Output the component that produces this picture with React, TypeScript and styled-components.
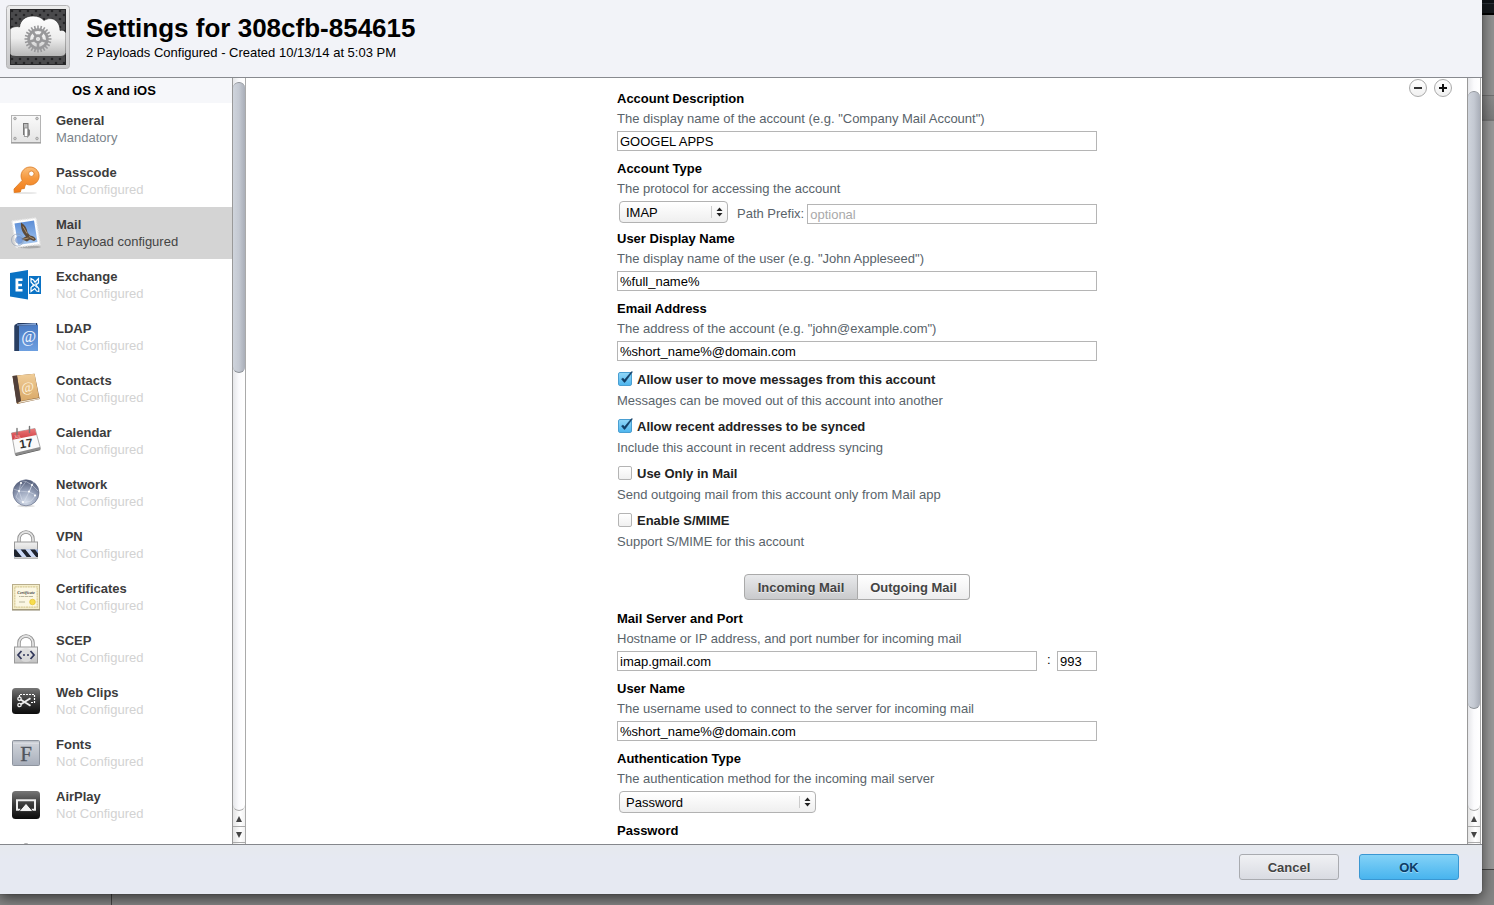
import React, { useState } from "react";
import styled, { createGlobalStyle, css } from "styled-components";

const GlobalStyle = createGlobalStyle`
  *, *::before, *::after { box-sizing: border-box; }
  html, body, #root { height: 100%; }
  body {
    margin: 0;
    overflow: hidden;
    font: 13px/20px "Liberation Sans", Helvetica, Arial, sans-serif;
    color: #000;
  }
  button, input, select { font: inherit; margin: 0; }
`;

/* ---------- Page behind the dialog ---------- */

const Page = styled.div`
  display: grid;
  grid-template: minmax(0, 1fr) 11px / minmax(0, 1fr) 12px;
  height: 100vh;
  background: #858585;
`;

const Dialog = styled.section`
  position: relative;
  z-index: 1;
  display: flex;
  flex-direction: column;
  min-width: 0;
  overflow: hidden;
  background: #fff;
  border-bottom-right-radius: 5px;
  box-shadow: 0 0 1px #222, 0 4px 14px rgba(0, 0, 0, 0.6);
`;

const BackdropSide = styled.div`
  display: flex;
  flex-direction: column;
`;

const BackdropToolbar = styled.div`
  height: 15px;
  background: linear-gradient(#0e1216 0 3px, #2c3238 3px 4px, #15191d 4px 13px, #000 13px);
`;

const BackdropPane = styled.div`
  height: 80px;
  background: #929292;
`;

const BackdropBar = styled.div`
  height: 26px;
  border-top: 1px solid #727272;
  border-bottom: 2px solid #777;
  background: linear-gradient(#8c8c8c, #7c7c7c);
`;

const BackdropRest = styled.div`
  flex: 1;
  margin-bottom: 24px;
  border-bottom: 1px solid #444;
  background: #999;
`;

const BackdropBottom = styled.div`
  grid-column: 1 / -1;
  display: flex;
`;

const BackdropColumn = styled.div`
  width: 112px;
  border-right: 1px solid #444;
`;

/* ---------- Dialog frame ---------- */

const Header = styled.header`
  display: flex;
  flex: none;
  gap: 16px;
  height: 78px;
  padding: 5px 6px;
  background: #f2f3f8;
  border-bottom: 1px solid #888a8f;
`;

const HeaderText = styled.div`
  padding-top: 7px;
`;

const Title = styled.h1`
  margin: 0;
  font-size: 26px;
  line-height: 32px;
`;

const Subtitle = styled.p`
  margin: 0;
  line-height: 18px;
`;

const Body = styled.div`
  display: flex;
  flex: 1;
  min-height: 0;
  padding-right: 1px;
`;

const Footer = styled.footer`
  display: flex;
  flex: none;
  justify-content: flex-end;
  gap: 20px;
  height: 50px;
  padding: 9px 23px;
  background: linear-gradient(#e6e9ee, #e6e9f2 30%);
  border-top: 1px solid #85878c;
`;

const ActionButton = styled.button<{ $primary?: boolean }>`
  width: 100px;
  height: 26px;
  padding: 2px 0 0;
  border: 1px solid #a9abb0;
  border-radius: 3px;
  background: linear-gradient(#f0f1f4, #d9dbe2);
  color: #444;
  font-weight: bold;
  text-shadow: 0 1px 0 rgba(255, 255, 255, 0.6);
  ${(p) =>
    p.$primary &&
    css`
      border-color: #3a97d2;
      background: linear-gradient(#83d2f7, #48b4ee);
      color: #0b3c66;
      text-shadow: 0 1px 0 rgba(255, 255, 255, 0.4);
    `}
`;

/* ---------- Scroll bars ---------- */

const Bar = styled.div`
  display: flex;
  flex: none;
  flex-direction: column;
  width: 14px;
  height: 100%;
  padding-bottom: 1px;
  border-left: 1px solid #999;
  border-right: 1px solid #aaa;
  background: linear-gradient(90deg, #e4e4e4, #fff 60%, #f2f2f2);
`;

const Track = styled.div<{ $offset: number }>`
  flex: 1;
  padding-top: ${(p) => p.$offset}px;
  border-bottom: 1px solid #aaa;
  border-radius: 0 0 6px 6px;
  background: linear-gradient(90deg, #e6e7ea, #fbfbfd 50%, #fff);
`;

const Thumb = styled.div<{ $share: number }>`
  height: ${(p) => p.$share}%;
  border: 1px solid #8d9197;
  border-width: 1px 0;
  border-radius: 6px;
  background: linear-gradient(90deg, #cfd4dc, #c4c9d2 50%, #a9aeb8);
`;

const StepButton = styled.button`
  display: grid;
  place-items: center;
  height: 16px;
  padding: 0;
  border: 0;
  border-bottom: 1px solid #aaa;
  background: transparent;
`;

function ScrollBar({ offset, share }: { offset: number; share: number }) {
  return (
    <Bar>
      <Track $offset={offset}>
        <Thumb $share={share} />
      </Track>
      <StepButton aria-label="Scroll up">
        <svg width="6" height="6" viewBox="0 0 6 6"><path d="M3 0L6 6H0z" fill="#444" /></svg>
      </StepButton>
      <StepButton aria-label="Scroll down">
        <svg width="6" height="6" viewBox="0 0 6 6"><path d="M3 6L0 0H6z" fill="#444" /></svg>
      </StepButton>
    </Bar>
  );
}

/* ---------- Sidebar ---------- */

const Sidebar = styled.nav`
  display: flex;
  flex: none;
  width: 246px;
`;

const SidebarList = styled.div`
  flex: 1;
  overflow: hidden;
`;

const SidebarHeading = styled.h2`
  height: 25px;
  margin: 0;
  padding-right: 4px;
  background: #f6f7fa;
  font-size: 13px;
  line-height: 25px;
  text-align: center;
`;

const PayloadButton = styled.button<{ $selected?: boolean }>`
  display: flex;
  align-items: center;
  gap: 14px;
  width: 100%;
  height: 52px;
  padding: 0 10px;
  border: 0;
  background: ${(p) => (p.$selected ? "#d4d4d4" : "#fff")};
  text-align: left;
  line-height: 17px;
`;

const PayloadName = styled.strong`
  display: block;
  color: #3c3c3c;
`;

const PayloadStatus = styled.span<{ $color: string }>`
  display: block;
  color: ${(p) => p.$color};
`;

/* ---------- Form ---------- */

const Content = styled.main`
  position: relative;
  flex: 1;
  min-width: 0;
  overflow: hidden;
  padding: 11px 0 0 1px;
`;

const PayloadControls = styled.div`
  position: absolute;
  top: 1px;
  right: 15px;
  display: flex;
  gap: 7px;
`;

const RoundButton = styled.button`
  display: grid;
  place-items: center;
  width: 18px;
  height: 18px;
  padding: 0;
  border: 1px solid #aaa;
  border-radius: 50%;
  background: linear-gradient(#fff, #f0f0f0);
`;

const Form = styled.form`
  width: 480px;
  margin: 0 auto;
`;

const Field = styled.div`
  display: flex;
  flex-direction: column;
  margin-bottom: 8px;
`;

const FieldLabel = styled.label`
  font-weight: bold;
`;

const Hint = styled.p`
  margin: 0;
  color: #59636a;
`;

const FieldHint = styled(Hint)`
  margin-bottom: 2px;
`;

const TextInput = styled.input`
  width: 100%;
  min-width: 0;
  height: 20px;
  padding: 2px 2px 0;
  border: 1px solid #b5b5b5;
  border-radius: 0;
  background: #fff;
  color: #000;
  outline: 0;
  &::placeholder { color: #a9a9a9; }
`;

const PortInput = styled(TextInput)`
  flex: none;
  width: 40px;
`;

const Row = styled.div`
  display: flex;
`;

const AccountTypeRow = styled(Row)`
  align-items: flex-end;
  gap: 3px;
  height: 23px;
  margin-bottom: -3px;
`;

const PrefixLabel = styled.label`
  flex: none;
  margin-left: 6px;
  color: #59636a;
`;

const Colon = styled.span`
  flex: none;
  width: 20px;
  padding-left: 10px;
  line-height: 18px;
`;

const SelectBox = styled.span<{ $width: number }>`
  position: relative;
  flex: none;
  align-self: flex-start;
  width: ${(p) => p.$width}px;
  height: 22px;
  margin-left: 2px;
  svg {
    position: absolute;
    top: 4px;
    right: 4px;
    pointer-events: none;
  }
`;

const Select = styled.select`
  appearance: none;
  width: 100%;
  height: 22px;
  padding: 1px 20px 1px 6px;
  border: 1px solid #b2b2b2;
  border-radius: 4px;
  background: linear-gradient(#fff, #efefef);
  color: #000;
`;

function DropDown({ id, width, options }: { id: string; width: number; options: string[] }) {
  return (
    <SelectBox $width={width}>
      <Select id={id}>
        {options.map((o) => <option key={o}>{o}</option>)}
      </Select>
      <svg width="13" height="14" viewBox="0 0 13 14">
        <path d="M.5 1v12" stroke="#ccc" />
        <path d="M8.500 2.500L11.500 6h-6zM8.500 11.500L5.500 8h6z" fill="#222" />
      </svg>
    </SelectBox>
  );
}

const CheckGroup = styled.div`
  height: 47px;
`;

const CheckLabel = styled.label`
  display: flex;
  gap: 5px;
  margin-bottom: 1px;
  padding-left: 1px;
  color: #222;
  font-weight: bold;
  line-height: 21px;
`;

const CheckBox = styled.span`
  position: relative;
  display: flex;
  align-self: flex-start;
  padding-top: 3px;
  svg {
    position: absolute;
    left: 0;
    bottom: 0;
    pointer-events: none;
  }
`;

const CheckInput = styled.input`
  appearance: none;
  width: 14px;
  height: 14px;
  border: 1px solid #b4b4b4;
  border-radius: 2px;
  background: linear-gradient(#fff, #f0f0f0);
  &:checked {
    border-color: #4a9fd2;
    background: linear-gradient(#8fd6f8, #4fb6ee);
  }
`;

function Check({ label, hint, initial }: { label: string; hint: string; initial: boolean }) {
  const [on, setOn] = useState(initial);
  return (
    <CheckGroup>
      <CheckLabel>
        <CheckBox>
          <CheckInput type="checkbox" checked={on} onChange={() => setOn(!on)} />
          {on && (
            <svg width="15" height="15" viewBox="0 0 15 15">
              <path d="M3.500 8L6 11.300 7 11.300 14.500 .8 13.300 .8 6.500 8.800 5 7z" fill="#123f66" stroke="#123f66" strokeWidth=".5" />
            </svg>
          )}
        </CheckBox>
        {label}
      </CheckLabel>
      <Hint>{hint}</Hint>
    </CheckGroup>
  );
}

const Segments = styled.div`
  display: flex;
  justify-content: center;
  padding: 17px 0 9px;
`;

const Segment = styled.button<{ $active: boolean }>`
  width: 113px;
  height: 26px;
  padding: 2px 0 0;
  border: 1px solid #aaa;
  background: ${(p) => (p.$active ? "linear-gradient(#e8e9eb, #c9cacc)" : "linear-gradient(#fff, #ededee)")};
  color: #444;
  font-weight: bold;
  text-shadow: 0 1px 0 rgba(255, 255, 255, 0.6);
  &:first-child { width: 114px; border-radius: 4px 0 0 4px; }
  &:last-child { border-left: 0; border-radius: 0 4px 4px 0; width: 112px; }
`;

/* ---------- Drawings ---------- */

const gearTeeth = Array.from({ length: 24 }, (_, i) => i * 15);

const ProfileIcon = () => (
  <svg width="64" height="64" viewBox="0 0 64 64">
    <defs>
      <pattern id="mesh" width="8" height="8" patternUnits="userSpaceOnUse">
        <rect width="8" height="8" fill="#4a4a4c" />
        <circle cx="2" cy="2" r="1.300" fill="#252527" />
        <circle cx="6" cy="6" r="1.300" fill="#252527" />
      </pattern>
      <linearGradient id="cloud" x1="0" y1="0" x2="0" y2="1">
        <stop offset="0" stopColor="#fff" /><stop offset=".55" stopColor="#ededed" /><stop offset="1" stopColor="#b5b5b5" />
      </linearGradient>
      <linearGradient id="frame" x1="0" y1="0" x2="0" y2="1">
        <stop offset="0" stopColor="#ececec" /><stop offset="1" stopColor="#c6c6c8" />
      </linearGradient>
      <clipPath id="inner"><rect x="4" y="4" width="56" height="56" /></clipPath>
    </defs>
    <rect x=".5" y=".5" width="63" height="63" rx="3" fill="url(#frame)" stroke="#b4b4b6" />
    <rect x="4.500" y="4.500" width="55" height="55" fill="url(#mesh)" stroke="#29292b" />
    <g clipPath="url(#inner)">
      <path d="M4 24C7 21.500 11 21 13.500 22C14.500 15 19.500 11 27 11C32 11 35.500 12.500 38 15.500C46 10.500 54 16 54 25.500C57 24.500 59 26 60 28V48Q59 51.500 55 51.500H10Q5 51.500 4 49Z" fill="url(#cloud)" stroke="#222" strokeWidth=".6" />
      <g transform="translate(32 34)" fill="none" stroke="#98989a">
        {gearTeeth.map((a) => <path key={a} d="M0 -10V-13.500" strokeWidth="1.600" transform={`rotate(${a})`} />)}
        <circle r="9.300" strokeWidth="2.800" />
        <circle r="3.400" strokeWidth="2.600" />
        {[36, 108, 180, 252, 324].map((a) => <path key={a} d="M0 -4V-9" strokeWidth="2.600" transform={`rotate(${a})`} />)}
        <circle r="1.400" fill="#ddd" stroke="none" />
      </g>
    </g>
  </svg>
);

const Defs = () => (
  <svg width="0" height="0" style={{ position: "absolute" }} aria-hidden="true">
    <defs>
      <linearGradient id="plate" x1="0" y1="0" x2="0" y2="1"><stop offset="0" stopColor="#fafafa" /><stop offset="1" stopColor="#e4e4e4" /></linearGradient>
      <linearGradient id="orange" x1="0" y1="0" x2="0" y2="1"><stop offset="0" stopColor="#fcc07c" /><stop offset=".45" stopColor="#f5973c" /><stop offset="1" stopColor="#f27c1a" /></linearGradient>
      <linearGradient id="sky" x1="0" y1="0" x2="0" y2="1"><stop offset="0" stopColor="#5b8dd6" /><stop offset="1" stopColor="#a5c6ee" /></linearGradient>
      <linearGradient id="blueBook" x1="0" y1="0" x2="0" y2="1"><stop offset="0" stopColor="#4a7bc4" /><stop offset="1" stopColor="#6d9fe0" /></linearGradient>
      <linearGradient id="tanBook" x1="0" y1="0" x2="0" y2="1"><stop offset="0" stopColor="#f0cd98" /><stop offset="1" stopColor="#d9a968" /></linearGradient>
      <linearGradient id="red" x1="0" y1="0" x2="0" y2="1"><stop offset="0" stopColor="#ea7a7a" /><stop offset="1" stopColor="#cf3b40" /></linearGradient>
      <radialGradient id="globe" cx=".5" cy=".85" r=".9"><stop offset="0" stopColor="#d3dbe8" /><stop offset=".5" stopColor="#96a1b9" /><stop offset="1" stopColor="#47516e" /></radialGradient>
      <linearGradient id="steel" x1="0" y1="0" x2="0" y2="1"><stop offset="0" stopColor="#f2f2f2" /><stop offset="1" stopColor="#c0c0c0" /></linearGradient>
      <linearGradient id="black" x1="0" y1="0" x2="0" y2="1"><stop offset="0" stopColor="#777" /><stop offset=".45" stopColor="#3c3c3c" /><stop offset="1" stopColor="#0c0c0c" /></linearGradient>
      <linearGradient id="slate" x1="0" y1="0" x2="0" y2="1"><stop offset="0" stopColor="#d3d6dc" /><stop offset="1" stopColor="#a8afbb" /></linearGradient>
    </defs>
  </svg>
);

const Icon = ({ children }: { children: React.ReactNode }) => (
  <svg width="32" height="32" viewBox="0 0 32 32" style={{ flex: "none" }} aria-hidden="true">{children}</svg>
);

const At = ({ x, y, color, size }: { x: number; y: number; color: string; size: number }) => (
  <text x={x} y={y} fill={color} fontFamily="Liberation Serif, serif" fontStyle="italic" fontSize={size} textAnchor="middle">@</text>
);

const Shackle = () => (
  <>
    <path d="M9 14V10a7 7 0 0 1 14 0V14" fill="none" stroke="#8c8c8c" strokeWidth="3.400" />
    <path d="M9 14V10a7 7 0 0 1 14 0V14" fill="none" stroke="#e2e2e2" strokeWidth="1.800" />
  </>
);

const icons: Record<string, React.ReactNode> = {
  General: (
    <>
      <rect x="1.500" y="2.500" width="29" height="27" fill="url(#plate)" stroke="#b4b4b4" />
      <path d="M1 30h30" stroke="#8e8e8e" />
      {[[5, 5.500], [27, 5.500], [5, 25.500], [27, 25.500]].map(([x, y]) => (
        <circle key={`${x}-${y}`} cx={x} cy={y} r="1.300" fill="#ccc" stroke="#999" strokeWidth=".8" />
      ))}
      <path d="M17 15l3 2v5l-3 3z" fill="#888" />
      <rect x="13.500" y="10.500" width="4.500" height="11" fill="#bbb" stroke="#777" />
      <rect x="14.300" y="15" width="3.500" height="8.500" fill="#fff" stroke="#888" strokeWidth=".8" />
    </>
  ),
  Passcode: (
    <>
      <ellipse cx="15" cy="28" rx="12" ry="1" fill="#e6e6e6" />
      <path fillRule="evenodd" d="M20 2a9 9 0 1 1-3.600 17.200L15 20.500l-.6 3-3.200.4-.8 3-6.200.6L4 24l8.200-8.600A9 9 0 0 1 20 2zM21.300 6a2.700 2.700 0 1 0 .1 5.400A2.700 2.700 0 0 0 21.300 6z" fill="url(#orange)" stroke="#d9761c" strokeWidth=".8" />
    </>
  ),
  Mail: (
    <>
      <ellipse cx="19" cy="30" rx="12" ry="1.500" fill="#aaa" />
      <path d="M2 4L26 1L30 27L6 30.500Z" fill="#fff" stroke="#e9e9e9" strokeWidth="1.500" strokeDasharray="1.500 1" />
      <path d="M4.500 6.500L24 3.500L27.500 25L8 28Z" fill="url(#sky)" />
      <path d="M11 5.500C15 8 17 11 17.500 15.500L20 18.500C23 19 25 20 26 22.500L24 24L20 22.500L17 24.500L11 22L16 19.500C12.500 16 10.500 11 11 5.500Z" fill="#5b4a3a" />
      <path d="M13 9.500L17 16.500M19 19.500L24 22M14 22L18.500 21" stroke="#b79a72" strokeWidth=".9" />
      <circle cx="7.500" cy="23" r="6" fill="none" stroke="#8b98ad" strokeWidth=".9" opacity=".7" />
      <circle cx="9" cy="23" r="3.500" fill="#6b93d6" stroke="#6f87b3" strokeWidth=".7" opacity=".7" />
    </>
  ),
  Exchange: (
    <>
      <path d="M0 4L18 1V30.500L0 27.500Z" fill="#0a72c4" />
      <path d="M5.500 9.500H12.500V12H8.300V14.700H12V17.200H8.300V20H12.500V22.500H5.500Z" fill="#fff" />
      <path d="M19 7H31V25H19Z" fill="#0a72c4" />
      <path d="M21 9.500L23.500 11L25 13.200L28.500 9.500V14L25.800 16L28.800 19.500V22.500L26.500 22L24.800 19.500L21 22.500V18.500L23.700 16L21 13Z" fill="none" stroke="#fff" strokeWidth="1.200" />
      <path d="M22.500 14.500L27 18.500M27 13.500L22.500 18" stroke="#fff" />
    </>
  ),
  LDAP: (
    <>
      <path d="M4.500 4L8 2H27L27.500 4V30H4.500Z" fill="#24395e" />
      <path d="M7 3.500L26 2V4.500H7Z" fill="#7fa0d2" />
      <path d="M9 5L28 4V30H9Z" fill="url(#blueBook)" />
      <path d="M4.500 5L9 5V30H4.500Z" fill="#283e62" />
      <At x={18.500} y={20.500} color="#eef4ff" size={16} />
    </>
  ),
  Contacts: (
    <>
      <path d="M2.500 3L24.500 .8L29.700 26L7 31Z" fill="#7b542e" />
      <path d="M7 2.500L24.500 .8L29 24.500L11 28Z" fill="url(#tanBook)" />
      <path d="M2.500 3L7 2.500L11 28L6.500 30Z" fill="#51403a" />
      <path d="M7 30.500L11 28.300L29 25L29.500 26Z" fill="#f2e6d0" />
      <g transform="rotate(-8 17 15)"><At x={17.500} y={19} color="#fff3dc" size={14} /></g>
    </>
  ),
  Calendar: (
    <>
      <path d="M5 29L28 23L30.700 25L6 31Z" fill="#555" />
      <path d="M1.500 8L25 3.500L30.500 23.500L5.300 29.500Z" fill="#fafafa" stroke="#999" strokeWidth=".8" />
      <path d="M5 28L29.800 22L30.500 24.500L5.800 30.500Z" fill="#8b8b8b" />
      <path d="M1.500 8L25 3.500L26.500 10L2.500 14.800Z" fill="url(#red)" />
      <path d="M7 9.500V3.500M19.500 7.500V1.500" stroke="#777" strokeWidth="1.400" strokeLinecap="round" />
      <text x="16" y="22.500" fill="#333" fontFamily="Liberation Sans, sans-serif" fontWeight="bold" fontSize="12" textAnchor="middle" transform="rotate(-9 16 18)">17</text>
      <text x="7.500" y="13" fill="#fbdada" fontFamily="Liberation Sans, sans-serif" fontSize="4" textAnchor="middle" transform="rotate(-9 8 12)">JUL</text>
    </>
  ),
  Network: (
    <>
      <ellipse cx="16" cy="29" rx="9" ry="1.200" fill="#ddd" />
      <circle cx="16" cy="15.800" r="13" fill="url(#globe)" stroke="#5b6480" strokeWidth=".6" />
      <path d="M10 3.500L16 4.500L22 8L19 15L9 14L6 20L13 26L21 24L26 18L19 15L24 4M9 14L11 5M19 15L14 25M22 8L28 14M3.500 12L9 14L13 26M16 4.500L9 14" fill="none" stroke="#e6ebf5" strokeWidth=".6" opacity=".7" />
      {[[9, 14], [19, 14.500], [22, 8], [13, 25], [25, 18.500], [11, 6]].map(([x, y]) => <circle key={`${x}-${y}`} cx={x} cy={y} r="1.100" fill="#fff" />)}
    </>
  ),
  VPN: (
    <>
      <Shackle />
      <rect x="4.500" y="13" width="23" height="16.500" fill="url(#steel)" stroke="#999" />
      <rect x="4" y="20.500" width="24" height="7.500" fill="#8fa9dc" />
      <path d="M4 20.500H6L12 28H5L4 26.500ZM10.500 20.500H15.500L21.500 28H16.500ZM20 20.500H25L28 24.500V28H26Z" fill="#20242e" />
      <path d="M6 20.500H10.500L16.500 28H12ZM15.500 20.500H20L26 28H21.500Z" fill="#cddaf5" />
      <path d="M4 29H28" stroke="#ddd" />
    </>
  ),
  Certificates: (
    <>
      <rect x="2.500" y="3.500" width="27" height="25" fill="#f5eecb" stroke="#b9ae8b" />
      <rect x="4.800" y="5.800" width="22.400" height="20.400" fill="#fbf7e2" stroke="#d9cb98" strokeWidth="1.200" strokeDasharray="2 .6" />
      <text x="16" y="12.500" fill="#444" fontFamily="Liberation Serif, serif" fontStyle="italic" fontWeight="bold" fontSize="4" textAnchor="middle">Certificate</text>
      <path d="M9 15.500h1.500m.5 0h3m.5 0h4m.5 0h4M9 21h6" stroke="#a8a48c" strokeWidth=".8" />
      <circle cx="22.500" cy="21" r="2.800" fill="#f7dd4e" stroke="#e2bf2c" strokeWidth=".7" />
      <path d="M2 29H30" stroke="#8d866c" />
    </>
  ),
  SCEP: (
    <>
      <Shackle />
      <rect x="4.500" y="14" width="23" height="16" fill="url(#steel)" stroke="#999" />
      <circle cx="16" cy="22" r="7" fill="#dcdcdc" opacity=".8" />
      <path d="M11.500 18L8 22L11.500 26M20.500 18L24 22L20.500 26" fill="none" stroke="#33395c" strokeWidth="1.800" />
      <path d="M13 22h2M17 22h2" stroke="#33395c" strokeWidth="1.600" />
    </>
  ),
  "Web Clips": (
    <>
      <rect x="2" y="3" width="28" height="26" rx="3.500" fill="url(#black)" />
      <path d="M9.500 12V9.500H24.500V17.500H20" fill="none" stroke="#fff" strokeWidth="1.200" strokeDasharray="2 1" />
      <path d="M10.500 14.500L20.500 20.800M10.500 19.500L20.500 13.200" stroke="#eee" strokeWidth="1.900" />
      <circle cx="9.500" cy="13.800" r="1.700" fill="none" stroke="#eee" strokeWidth="1.300" />
      <circle cx="9.500" cy="20" r="1.700" fill="none" stroke="#eee" strokeWidth="1.300" />
    </>
  ),
  Fonts: (
    <>
      <rect x="2.500" y="3.500" width="27" height="25" rx="1" fill="url(#slate)" stroke="#8f959f" />
      <path d="M3 5H29" stroke="#a9aeb6" />
      <path d="M3 6H29" stroke="#e3e6ea" />
      <text x="16" y="24" fill="#50555e" stroke="#50555e" strokeWidth=".3" fontFamily="Liberation Serif, serif" fontSize="21" textAnchor="middle">F</text>
    </>
  ),
  AirPlay: (
    <>
      <rect x="2" y="2" width="28" height="28" rx="3.500" fill="url(#black)" />
      <path d="M10.500 20.700H7V11.200H25V20.700H21.500" fill="none" stroke="#eee" strokeWidth="2" />
      <path d="M16 14.300L23 22.500H9Z" fill="#f2f2f2" stroke="#1c1c1c" strokeWidth=".8" />
    </>
  ),
  "Global HTTP Proxy": <path d="M14.500 2h3L19 6H13z" fill="#b5b5b5" />,
};

/* ---------- App ---------- */

const statuses: Record<string, { text: string; color: string }> = {
  General: { text: "Mandatory", color: "#7b848b" },
  Mail: { text: "1 Payload configured", color: "#444" },
};
const notConfigured = { text: "Not Configured", color: "#d2d2d2" };

const payloads = [
  "General", "Passcode", "Mail", "Exchange", "LDAP", "Contacts", "Calendar", "Network",
  "VPN", "Certificates", "SCEP", "Web Clips", "Fonts", "AirPlay",
];

function TextField({ id, label, hint, value }: { id: string; label: string; hint: string; value: string }) {
  return (
    <Field>
      <FieldLabel htmlFor={id}>{label}</FieldLabel>
      <FieldHint>{hint}</FieldHint>
      <TextInput id={id} defaultValue={value} />
    </Field>
  );
}

export default function App() {
  const [selected, setSelected] = useState("Mail");
  const [tab, setTab] = useState("Incoming Mail");
  return (
    <>
      <GlobalStyle />
      <Defs />
      <Page>
        <Dialog aria-labelledby="dialog-title">
          <Header>
            <ProfileIcon />
            <HeaderText>
              <Title id="dialog-title">Settings for 308cfb-854615</Title>
              <Subtitle>2 Payloads Configured - Created 10/13/14 at 5:03 PM</Subtitle>
            </HeaderText>
          </Header>
          <Body>
            <Sidebar>
              <SidebarList>
                <SidebarHeading>OS X and iOS</SidebarHeading>
                {payloads.map((name) => {
                  const status = statuses[name] ?? notConfigured;
                  return (
                    <PayloadButton key={name} $selected={name === selected} onClick={() => setSelected(name)}>
                      <Icon>{icons[name]}</Icon>
                      <span>
                        <PayloadName>{name}</PayloadName>
                        <PayloadStatus $color={status.color}>{status.text}</PayloadStatus>
                      </span>
                    </PayloadButton>
                  );
                })}
                <PayloadButton aria-label="Global HTTP Proxy">
                  <Icon>{icons["Global HTTP Proxy"]}</Icon>
                </PayloadButton>
              </SidebarList>
              <ScrollBar offset={4} share={40} />
            </Sidebar>
            <Content>
              <PayloadControls>
                <RoundButton aria-label="Remove payload">
                  <svg width="8" height="8" viewBox="0 0 8 8"><path d="M0 4h8" stroke="#333" strokeWidth="2" /></svg>
                </RoundButton>
                <RoundButton aria-label="Add payload">
                  <svg width="8" height="8" viewBox="0 0 8 8"><path d="M0 4h8M4 0v8" stroke="#111" strokeWidth="2" /></svg>
                </RoundButton>
              </PayloadControls>
              <Form onSubmit={(e) => e.preventDefault()}>
                <TextField id="description" label="Account Description" hint={'The display name of the account (e.g. "Company Mail Account")'} value="GOOGEL APPS" />
                <Field>
                  <FieldLabel htmlFor="type">Account Type</FieldLabel>
                  <FieldHint>The protocol for accessing the account</FieldHint>
                  <AccountTypeRow>
                    <DropDown id="type" width={109} options={["IMAP", "POP"]} />
                    <PrefixLabel htmlFor="prefix">Path Prefix:</PrefixLabel>
                    <TextInput id="prefix" placeholder="optional" />
                  </AccountTypeRow>
                </Field>
                <TextField id="display-name" label="User Display Name" hint={'The display name of the user (e.g. "John Appleseed")'} value="%full_name%" />
                <TextField id="email" label="Email Address" hint={'The address of the account (e.g. "john@example.com")'} value="%short_name%@domain.com" />
                <Check label="Allow user to move messages from this account" hint="Messages can be moved out of this account into another" initial />
                <Check label="Allow recent addresses to be synced" hint="Include this account in recent address syncing" initial />
                <Check label="Use Only in Mail" hint="Send outgoing mail from this account only from Mail app" initial={false} />
                <Check label="Enable S/MIME" hint="Support S/MIME for this account" initial={false} />
                <Segments>
                  {["Incoming Mail", "Outgoing Mail"].map((name) => (
                    <Segment key={name} type="button" $active={name === tab} onClick={() => setTab(name)}>{name}</Segment>
                  ))}
                </Segments>
                <Field>
                  <FieldLabel htmlFor="server">Mail Server and Port</FieldLabel>
                  <FieldHint>Hostname or IP address, and port number for incoming mail</FieldHint>
                  <Row>
                    <TextInput id="server" defaultValue="imap.gmail.com" />
                    <Colon>:</Colon>
                    <PortInput aria-label="Port" defaultValue="993" />
                  </Row>
                </Field>
                <TextField id="user-name" label="User Name" hint="The username used to connect to the server for incoming mail" value="%short_name%@domain.com" />
                <Field>
                  <FieldLabel htmlFor="auth">Authentication Type</FieldLabel>
                  <FieldHint>The authentication method for the incoming mail server</FieldHint>
                  <DropDown id="auth" width={197} options={["Password", "None"]} />
                </Field>
                <FieldLabel as="span">Password</FieldLabel>
              </Form>
            </Content>
            <ScrollBar offset={13} share={86} />
          </Body>
          <Footer>
            <ActionButton>Cancel</ActionButton>
            <ActionButton $primary>OK</ActionButton>
          </Footer>
        </Dialog>
        <BackdropSide>
          <BackdropToolbar />
          <BackdropPane />
          <BackdropBar />
          <BackdropRest />
        </BackdropSide>
        <BackdropBottom>
          <BackdropColumn />
        </BackdropBottom>
      </Page>
    </>
  );
}
